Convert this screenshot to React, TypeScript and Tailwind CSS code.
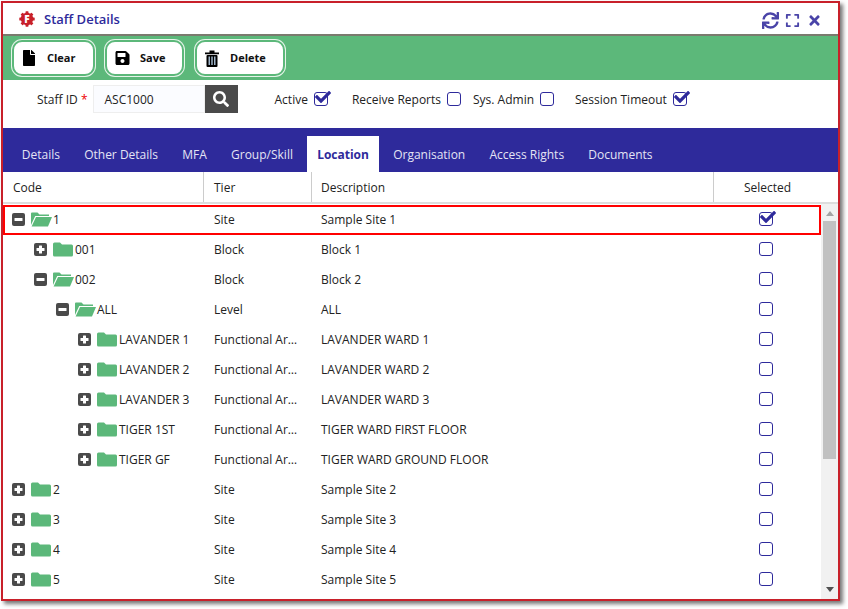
import { FaCheck, FaExpand, FaFile, FaSave, FaSearch, FaSync, FaTimes } from 'react-icons/fa'

const rows = [
  { depth: 0, code: '1', tier: 'Site', desc: 'Sample Site 1', open: true, checked: true },
  { depth: 1, code: '001', tier: 'Block', desc: 'Block 1' },
  { depth: 1, code: '002', tier: 'Block', desc: 'Block 2', open: true },
  { depth: 2, code: 'ALL', tier: 'Level', desc: 'ALL', open: true },
  { depth: 3, code: 'LAVANDER 1', tier: 'Functional Area', desc: 'LAVANDER WARD 1' },
  { depth: 3, code: 'LAVANDER 2', tier: 'Functional Area', desc: 'LAVANDER WARD 2' },
  { depth: 3, code: 'LAVANDER 3', tier: 'Functional Area', desc: 'LAVANDER WARD 3' },
  { depth: 3, code: 'TIGER 1ST', tier: 'Functional Area', desc: 'TIGER WARD FIRST FLOOR' },
  { depth: 3, code: 'TIGER GF', tier: 'Functional Area', desc: 'TIGER WARD GROUND FLOOR' },
  { depth: 0, code: '2', tier: 'Site', desc: 'Sample Site 2' },
  { depth: 0, code: '3', tier: 'Site', desc: 'Sample Site 3' },
  { depth: 0, code: '4', tier: 'Site', desc: 'Sample Site 4' },
  { depth: 0, code: '5', tier: 'Site', desc: 'Sample Site 5' },
]

const tabs = ['Details', 'Other Details', 'MFA', 'Group/Skill', 'Location', 'Organisation', 'Access Rights', 'Documents']

function Logo() {
  return (
    <svg width="16" height="16" viewBox="0 0 16 16">
      <g fill="#c8202a">
        <circle cx="8" cy="8" r="6.2" />
        {[0, 45, 90, 135, 180, 225, 270, 315].map((a) => (
          <rect key={a} x="6.5" y="0.3" width="3" height="3" rx="0.6" transform={`rotate(${a} 8 8)`} />
        ))}
      </g>
      <text x="8" y="11.6" textAnchor="middle" fontSize="10" fontWeight="800" fontFamily="Open Sans" fill="#fff">
        F
      </text>
    </svg>
  )
}

function TrashIcon() {
  return (
    <svg width="14" height="17" viewBox="0 0 14 17">
      <path d="M4.5 0.5H9.5V2.5H14V4.3H0V2.5H4.5Z" fill="#000" />
      <rect x="1.5" y="5" width="11" height="12" rx="1" fill="#000" />
      <path d="M3.5 6.5H5V15H3.5ZM6.25 6.5H7.75V15H6.25ZM9 6.5H10.5V15H9Z" fill="#9fb4c8" />
    </svg>
  )
}

function Checkbox({ checked }: { checked?: boolean }) {
  return (
    <span className="relative block h-[14px] w-[14px] rounded-[3px] border-[1.5px] border-[#2e2a9b] bg-white">
      {checked && <FaCheck className="absolute left-[0px] top-[-4px] h-[16px] w-[16px] text-[#2e2a9b]" />}
    </span>
  )
}

function Toggle({ open }: { open?: boolean }) {
  return (
    <svg width="13" height="13" viewBox="0 0 13 13" className="shrink-0">
      <rect width="13" height="13" rx="2" fill="#4a4a4a" />
      <rect x="2.5" y="5" width="8" height="3" rx="0.5" fill="#fff" />
      {!open && <rect x="5" y="2.5" width="3" height="8" rx="0.5" fill="#fff" />}
    </svg>
  )
}

function Folder({ open }: { open?: boolean }) {
  return (
    <svg width="21" height="15" viewBox="0 0 21 15" className="ml-[6px] shrink-0">
      {open ? (
        <>
          <path d="M0 13V1.5Q0 0.5 1 0.5H6.5L8.5 2.5H18V4H4.2Z" fill="#5cb87a" />
          <path d="M5 5H21L17 14.5H0.6Z" fill="#5cb87a" />
        </>
      ) : (
        <path d="M0 2Q0 0.5 1.5 0.5H7L9 2.5H18.5Q20 2.5 20 4V13Q20 14.5 18.5 14.5H1.5Q0 14.5 0 13Z" fill="#5cb87a" />
      )}
    </svg>
  )
}

function ActionButton({ label, width, icon }: { label: string; width: string; icon: React.ReactNode }) {
  return (
    <button className={`flex h-[36px] ${width} items-center rounded-[10px] border-2 border-[#5cb87a] bg-white pl-[8px] text-[11px] font-bold text-[#111] ring-1 ring-[#e6f4ea]`}>
      <span className="flex w-[25px] justify-start text-black">{icon}</span>
      <span>{label}</span>
    </button>
  )
}

function Option({ label, checked, className }: { label: string; checked?: boolean; className: string }) {
  return (
    <label className={`flex items-center gap-[6px] ${className}`}>
      <span className="pt-[2px]">{label}</span>
      <Checkbox checked={checked} />
    </label>
  )
}

export default function App() {
  return (
    <div className="h-[609px] w-[848px] bg-white p-px font-['Open_Sans',sans-serif] text-[12px] text-[#222]">
      <div className="flex h-[600px] w-[839px] flex-col overflow-hidden border-2 border-[#c8202a] bg-white shadow-[3px_3px_4px_#777]">
        <header className="flex h-[33px] shrink-0 items-center border-b-2 border-[#7a7a6e] pl-[16px] pr-[17px]">
          <Logo />
          <span className="ml-[9px] pt-[2px] text-[13px] font-semibold text-[#2e2a9b]">Staff Details</span>
          <div className="ml-auto flex items-center pt-[3px] text-[#4a44a8]">
            <FaSync className="h-[17px] w-[17px]" />
            <FaExpand className="ml-[6px] h-[15px] w-[15px]" />
            <FaTimes className="ml-[8px] h-[15px] w-[13px]" />
          </div>
        </header>

        <div className="flex h-[44px] shrink-0 items-center bg-[#5cb87a] pl-[9px]">
          <ActionButton label="Clear" width="w-[83px]" icon={<FaFile className="h-[16px] w-[14px]" />} />
          <div className="w-[10px]" />
          <ActionButton label="Save" width="w-[79px]" icon={<FaSave className="h-[16px] w-[15px]" />} />
          <div className="w-[11px]" />
          <ActionButton label="Delete" width="w-[90px]" icon={<TrashIcon />} />
        </div>

        <div className="flex h-[48px] shrink-0 items-start pl-[34px] pt-[5px]">
          <div className="flex h-[28px] items-center">
            <span className="pt-[2px]">
              Staff ID <span className="text-[#e00]">*</span>
            </span>
            <div className="ml-[5px] flex h-[28px] w-[112px] items-center border border-[#eee] bg-[#fbfcff] pl-[11px] pt-[2px]">ASC1000</div>
            <div className="flex h-[28px] w-[33px] items-center justify-center bg-[#4a4a4a] text-white">
              <FaSearch className="h-[16px] w-[16px]" />
            </div>
            <Option label="Active" checked className="ml-[37px]" />
            <Option label="Receive Reports" className="ml-[24px]" />
            <Option label="Sys. Admin" className="ml-[12px]" />
            <Option label="Session Timeout" checked className="ml-[21px]" />
          </div>
        </div>

        <nav className="flex h-[44px] shrink-0 items-end gap-[4.2px] bg-[#2e2a9b] pl-[8.8px]">
          {tabs.map((t) => (
            <div
              key={t}
              className={t === 'Location' ? 'flex h-[36px] items-center bg-white px-[10px] pt-[2px] font-bold text-[#2e2a9b]' : 'flex h-[36px] items-center px-[10px] pt-[2px] text-[#e4e4f4]'}
            >
              {t}
            </div>
          ))}
        </nav>

        <div className="grid h-[32px] shrink-0 grid-cols-[201px_108px_402px_107px] border-b-2 border-[#ddd]">
          <div className="flex items-center border-r border-[#ccc] pl-[10px] pt-[2px]">Code</div>
          <div className="flex items-center border-r border-[#ccc] pl-[10px] pt-[2px]">Tier</div>
          <div className="flex items-center border-r border-[#ccc] pl-[9px] pt-[2px]">Description</div>
          <div className="flex items-center justify-center pt-[2px]">Selected</div>
        </div>

        <div className="flex min-h-0 flex-1">
          <div className="min-w-0 flex-1 overflow-hidden">
            {rows.map((r) => (
              <div key={r.code} className="relative grid h-[30px] grid-cols-[200px_108px_402px_108px] items-center">
                {r.checked && <div className="absolute left-0 right-0 top-px h-[30px] border-2 border-[#f00]" />}
                <div className="flex items-center" style={{ paddingLeft: 9 + r.depth * 22 }}>
                  <Toggle open={r.open} />
                  <Folder open={r.open} />
                  <span className="ml-px whitespace-nowrap pt-[2px]">{r.code}</span>
                </div>
                <div className="truncate pl-[11px] pr-[12px] pt-[2px]">{r.tier}</div>
                <div className="pl-[10px] pt-[2px]">{r.desc}</div>
                <div className="flex justify-center pr-[2px]">
                  <Checkbox checked={r.checked} />
                </div>
              </div>
            ))}
          </div>
          <div className="flex w-[17px] shrink-0 flex-col items-center bg-[#f1f1f1] pt-[7px]">
            <svg width="8" height="5" viewBox="0 0 8 5" className="mb-[5px]">
              <path d="M4 0L8 5H0Z" fill="#a3a3a3" />
            </svg>
            <div className="h-[238px] w-[13px] bg-[#c1c1c1]" />
            <svg width="8" height="5" viewBox="0 0 8 5" className="mb-[7px] mt-auto">
              <path d="M0 0H8L4 5Z" fill="#505050" />
            </svg>
          </div>
        </div>
      </div>
    </div>
  )
}
